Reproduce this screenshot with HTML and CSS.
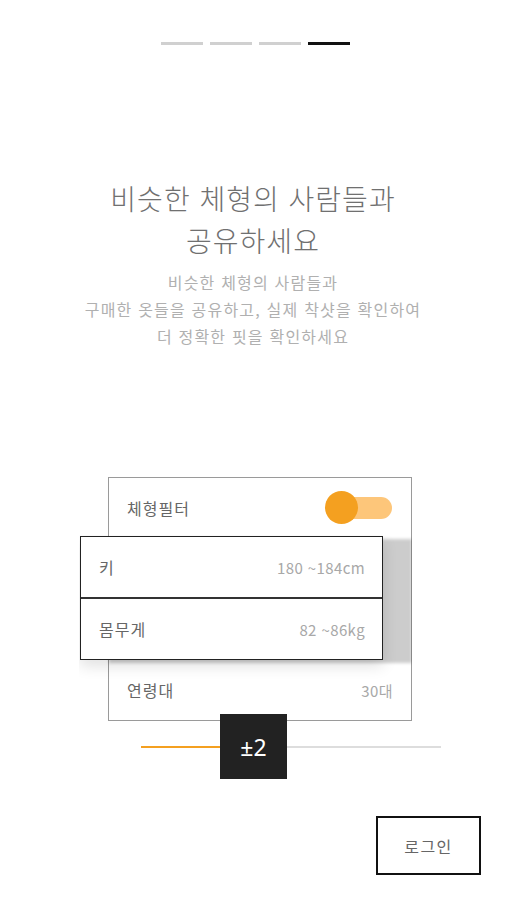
FILE: index.html
```html
<!DOCTYPE html>
<html lang="ko">
<head>
  <meta charset="UTF-8" />
  <meta name="viewport" content="width=device-width, initial-scale=1.0"/>
  <title>체형필터</title>
  <link rel="stylesheet" href="styles.css">
</head>
<body>
  <div class="screen">
    <div class="steps">
      <span class="step"></span>
      <span class="step"></span>
      <span class="step"></span>
      <span class="step active"></span>
    </div>

    <h1 class="title">비슷한 체형의 사람들과<br>공유하세요</h1>
    <p class="desc">비슷한 체형의 사람들과<br>구매한 옷들을 공유하고, 실제 착샷을 확인하여<br>더 정확한 핏을 확인하세요</p>

    <div class="filter-card">
      <div class="row first">
        <span class="label">체형필터</span>
        <div class="toggle">
          <span class="toggle-track"></span>
          <span class="toggle-knob"></span>
        </div>
      </div>
      <div class="popup">
        <div class="row">
          <span class="label">키</span>
          <span class="value">180 ~184cm</span>
        </div>
        <div class="row">
          <span class="label">몸무게</span>
          <span class="value">82 ~86kg</span>
        </div>
      </div>
      <div class="row">
        <span class="label">연령대</span>
        <span class="value">30대</span>
      </div>
    </div>

    <div class="slider">
      <div class="slider-fill"></div>
      <div class="slider-thumb">±2</div>
    </div>

    <div class="actions">
      <button class="login-btn">로그인</button>
    </div>
  </div>
</body>
</html>
```

FILE: styles.css
```css
body {
  margin: 0;
  background: #fff;
  font-family: "Noto Sans CJK KR", "Noto Sans", sans-serif;
  color: #555;
}
.screen {
  width: 506px;
  height: 900px;
  overflow: hidden;
}
.steps {
  display: flex;
  justify-content: center;
  gap: 7px;
  padding-top: 42px;
  margin-left: 5px;
}
.step {
  width: 42px;
  height: 3px;
  background: #d0d0d0;
}
.step.active {
  background: #111;
}
.title {
  margin: 132px 0 0;
  text-align: center;
  font-size: 28px;
  line-height: 42px;
  letter-spacing: 1px;
  font-weight: 300;
  color: #707070;
}
.desc {
  margin: 8px 0 0;
  text-align: center;
  font-size: 16px;
  line-height: 27px;
  letter-spacing: 1.2px;
  color: #b0b0b0;
}
.filter-card {
  width: 302px;
  margin: 127px 0 0 108px;
  border: 1px solid #9a9a9a;
  background: #fff;
}
.row {
  height: 60px;
  display: flex;
  align-items: center;
  justify-content: space-between;
  padding: 0 18px;
}
.row.first {
  height: 59px;
}
.label {
  font-size: 16px;
  letter-spacing: 1px;
  color: #666;
}
.value {
  font-size: 15px;
  letter-spacing: 0.4px;
  color: #a8a8a8;
}
.toggle {
  position: relative;
  width: 67px;
  height: 33px;
  margin-right: 1px;
}
.toggle-track {
  position: absolute;
  left: 10px;
  right: 0;
  top: 6px;
  height: 22px;
  border-radius: 11px;
  background: #fdc67a;
}
.toggle-knob {
  position: absolute;
  left: 0;
  top: 0;
  width: 33px;
  height: 33px;
  border-radius: 50%;
  background: #f4a020;
}
.popup {
  width: 301px;
  margin: -1px 0 0 -29px;
  border: 1px solid #222;
  background: #fff;
  box-shadow: 29px 3px 3px rgba(0, 0, 0, 0.2), 0 6px 14px rgba(0, 0, 0, 0.12);
  clip-path: inset(-1px -29px -30px -1px);
  position: relative;
}
.popup .row {
  height: 60px;
}
.popup .row + .row {
  border-top: 2px solid #333;
}
.popup .value {
  margin-right: -1px;
}
.slider {
  position: relative;
  width: 300px;
  height: 2px;
  margin: 25px 0 0 141px;
  background: #ddd;
}
.slider-fill {
  width: 80px;
  height: 100%;
  background: #f4a020;
}
.slider-thumb {
  position: absolute;
  left: 79px;
  top: -32px;
  width: 67px;
  height: 65px;
  display: flex;
  align-items: center;
  justify-content: center;
  background: #222;
  color: #fff;
  font-family: "Noto Sans", sans-serif;
  font-size: 23px;
}
.actions {
  display: flex;
  justify-content: flex-end;
  padding: 68px 25px 0 0;
}
.login-btn {
  width: 105px;
  height: 59px;
  border: 2px solid #111;
  background: #fff;
  font-family: "Noto Sans CJK KR", sans-serif;
  font-size: 16px;
  letter-spacing: 1.5px;
  color: #666;
  cursor: pointer;
}
```
